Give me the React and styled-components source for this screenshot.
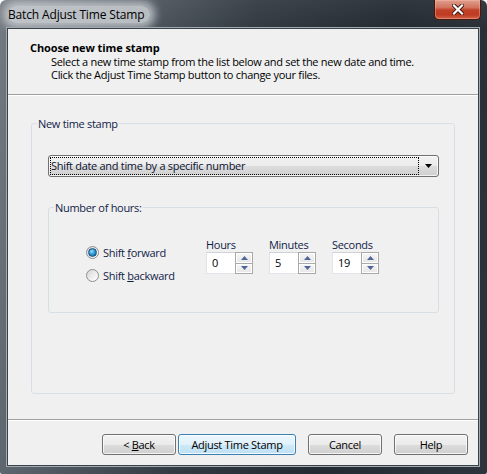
import React from 'react';
import styled, { createGlobalStyle } from 'styled-components';

const GlobalStyle = createGlobalStyle`
  html, body {
    margin: 0;
    padding: 0;
    background: #fff;
  }
  body {
    font-family: "Open Sans", "Noto Sans", sans-serif;
    font-size: 11px;
    letter-spacing: -0.3px;
    color: #000;
  }
  * {
    box-sizing: border-box;
  }
`;

const Window = styled.div`
  width: 487px;
  height: 474px;
  display: flex;
  flex-direction: column;
  border-radius: 6px 6px 2px 2px;
  overflow: hidden;
  background:
    linear-gradient(180deg, rgba(255, 255, 255, 0.06) 0%, rgba(0, 0, 0, 0) 30px),
    linear-gradient(100deg, #737a81 0%, #59616a 18%, #323a42 45%, #232a31 70%, #2d343b 100%);
`;

const TitleBar = styled.div`
  height: 28px;
  flex: none;
  display: flex;
  justify-content: space-between;
  align-items: flex-start;
  padding-left: 8px;
  padding-right: 6px;
`;

const TitleText = styled.span`
  margin-top: 6px;
  line-height: 17px;
  font-size: 12px;
  letter-spacing: -0.15px;
  color: #000;
  background: rgba(210, 214, 218, 0.8);
  border-radius: 8px;
  box-shadow: 0 0 8px 5px rgba(210, 214, 218, 0.78);
  padding-right: 6px;
`;

const CloseButton = styled.div`
  width: 47px;
  height: 20px;
  display: flex;
  align-items: center;
  justify-content: center;
  border: 1px solid #4a170e;
  border-top: none;
  border-radius: 0 0 5px 5px;
  background: linear-gradient(180deg, #e0a090 0%, #d2735d 40%, #c14229 52%, #bd3b22 78%, #d2654a 100%);
  box-shadow: inset 0 0 0 1px rgba(255, 190, 170, 0.4);
`;

const Client = styled.div`
  flex: 1;
  display: flex;
  flex-direction: column;
  margin: 0 8px 8px 7px;
  background: #f0f0f0;
  border: 1px solid #3a4249;
  box-shadow: 0 0 0 1px #a2aab1;
`;

const Header = styled.div`
  height: 66px;
  flex: none;
  padding: 11px 0 0 22px;
  border-bottom: 1px solid #a0a0a0;
  box-shadow: 0 1px 0 #fff;
`;

const HeaderTitle = styled.div`
  font-weight: 700;
  letter-spacing: -0.1px;
  line-height: 15px;
`;

const HeaderText = styled.div`
  margin-left: 21px;
  line-height: 13px;
`;

const Body = styled.div`
  flex: 1;
  display: flex;
  flex-direction: column;
  padding: 21px 23px 25px 23px;
`;

const Group = styled.fieldset`
  margin: 0;
  padding: 0;
  min-width: 0;
  border: 1px solid #d5dfe5;
  border-radius: 3px;
  flex: ${p => (p.$grow ? 1 : 'none')};
`;

const Legend = styled.legend`
  margin-left: 5px;
  padding: 0 1px;
  line-height: 15px;
  color: #101c48;
`;

const GroupInner = styled.div`
  padding: ${p => p.$pad};
`;

const Dropdown = styled.div`
  height: 22px;
  display: flex;
  align-items: stretch;
  padding: 1px;
  border: 1px solid #707070;
  border-radius: 3px;
  background: linear-gradient(180deg, #f2f2f2 0%, #ebebeb 50%, #dddddd 50%, #cfcfcf 100%);
  box-shadow: inset 0 0 0 1px rgba(255, 255, 255, 0.7);
`;

const FocusText = styled.div`
  flex: 1;
  border: 1px dotted #000;
  line-height: 16px;
  color: #0a1030;
`;

const Arrow = styled.div`
  width: 18px;
  display: flex;
  align-items: center;
  justify-content: center;
`;

const HoursRow = styled.div`
  display: flex;
  align-items: flex-start;
`;

const RadioColumn = styled.div`
  width: 120px;
  margin-top: 28px;
  display: flex;
  flex-direction: column;
  gap: 5px;
`;

const RadioRow = styled.label`
  height: 18px;
  display: flex;
  align-items: center;
  gap: 4px;
  color: #101c48;
`;

const RadioCircle = styled.span`
  width: 13px;
  height: 13px;
  border-radius: 50%;
  border: 1px solid #8e8f8f;
  background: linear-gradient(135deg, #d6d6d6 0%, #f4f4f4 70%, #ffffff 100%);
  display: flex;
  align-items: center;
  justify-content: center;
  &::after {
    content: '';
    display: ${p => (p.$checked ? 'block' : 'none')};
    width: 7px;
    height: 7px;
    border-radius: 50%;
    border: 1px solid #1f4f78;
    background: radial-gradient(circle at 40% 35%, #9fe0fb 0%, #2e9ad6 45%, #0d5c94 100%);
  }
`;

const Key = styled.span`
  text-decoration: underline;
`;

const SpinColumns = styled.div`
  display: flex;
  gap: 16px;
  margin-top: 22px;
`;

const SpinField = styled.div`
  display: flex;
  flex-direction: column;
`;

const SpinLabel = styled.div`
  line-height: 15px;
  color: #101c48;
`;

const SpinBox = styled.div`
  width: 47px;
  height: 22px;
  display: flex;
`;

const SpinInput = styled.div`
  width: 29px;
  background: #fff;
  border: 1px solid #e2e3ea;
  border-top-color: #cfd2d8;
  border-right: none;
  padding-left: 5px;
  line-height: 20px;
`;

const SpinButtons = styled.div`
  width: 18px;
  display: flex;
  flex-direction: column;
`;

const SpinButton = styled.div`
  flex: 1;
  display: flex;
  align-items: center;
  justify-content: center;
  border: 1px solid #a9a9a9;
  border-top-width: ${p => (p.$down ? 0 : 1)}px;
  background: linear-gradient(180deg, #f6f6f6 0%, #e6e6e6 100%);
  box-shadow: inset 0 0 0 1px #fff;
`;

const Footer = styled.div`
  height: 46px;
  flex: none;
  display: flex;
  justify-content: flex-end;
  align-items: flex-start;
  padding: 14px 10px 0 0;
  border-top: 1px solid #a0a0a0;
  box-shadow: inset 0 1px 0 #fff;
`;

const Button = styled.button`
  width: ${p => p.$w}px;
  height: 21px;
  margin: 0 ${p => p.$gap}px 0 0;
  padding: 0;
  font: inherit;
  letter-spacing: inherit;
  color: #000;
  border: 1px solid ${p => (p.$default ? '#3c7fb1' : '#707070')};
  border-radius: 3px;
  background: ${p =>
    p.$default
      ? 'linear-gradient(180deg, #ecf7fd 0%, #e0f1fb 50%, #cde9f8 50%, #bfe1f4 100%)'
      : 'linear-gradient(180deg, #f2f2f2 0%, #ebebeb 50%, #dddddd 50%, #cfcfcf 100%)'};
  box-shadow: inset 0 0 0 1px rgba(255, 255, 255, 0.75);
`;

const UpArrow = () => (
  <svg width="7" height="4" viewBox="0 0 7 4">
    <polygon points="0,4 3.5,0 7,4" fill="#4f6698" />
  </svg>
);

const DownArrow = ({ color = '#4f6698', w = 7, h = 4 }) => (
  <svg width={w} height={h} viewBox={`0 0 ${w} ${h}`}>
    <polygon points={`0,0 ${w},0 ${w / 2},${h}`} fill={color} />
  </svg>
);

const CloseIcon = () => (
  <svg width="12" height="11" viewBox="0 0 12 11">
    <path d="M2 1.5 L10 9.5 M10 1.5 L2 9.5" stroke="#3b130b" strokeWidth="4" strokeLinecap="square" />
    <path d="M2 1.5 L10 9.5 M10 1.5 L2 9.5" stroke="#ffffff" strokeWidth="2.2" strokeLinecap="square" />
  </svg>
);

const spinners = [
  { label: 'Hours', value: '0' },
  { label: 'Minutes', value: '5' },
  { label: 'Seconds', value: '19' },
];

const App = () => (
  <>
    <GlobalStyle />
    <Window>
      <TitleBar>
        <TitleText>Batch Adjust Time Stamp</TitleText>
        <CloseButton>
          <CloseIcon />
        </CloseButton>
      </TitleBar>
      <Client>
        <Header>
          <HeaderTitle>Choose new time stamp</HeaderTitle>
          <HeaderText>
            Select a new time stamp from the list below and set the new date and time.
            <br />
            Click the Adjust Time Stamp button to change your files.
          </HeaderText>
        </Header>
        <Body>
          <Group $grow>
            <Legend>New time stamp</Legend>
            <GroupInner $pad="24px 15px 0 16px">
              <Dropdown>
                <FocusText>Shift date and time by a specific number</FocusText>
                <Arrow>
                  <DownArrow color="#000" w={7} h={4} />
                </Arrow>
              </Dropdown>
              <GroupInner $pad="23px 0 0 0">
                <Group>
                  <Legend>Number of hours:</Legend>
                  <GroupInner $pad="0 0 28px 37px">
                    <HoursRow>
                      <RadioColumn>
                        <RadioRow>
                          <RadioCircle $checked />
                          <span>Shift <Key>f</Key>orward</span>
                        </RadioRow>
                        <RadioRow>
                          <RadioCircle />
                          <span>Shift <Key>b</Key>ackward</span>
                        </RadioRow>
                      </RadioColumn>
                      <SpinColumns>
                        {spinners.map(s => (
                          <SpinField key={s.label}>
                            <SpinLabel>{s.label}</SpinLabel>
                            <SpinBox>
                              <SpinInput>{s.value}</SpinInput>
                              <SpinButtons>
                                <SpinButton>
                                  <UpArrow />
                                </SpinButton>
                                <SpinButton $down>
                                  <DownArrow />
                                </SpinButton>
                              </SpinButtons>
                            </SpinBox>
                          </SpinField>
                        ))}
                      </SpinColumns>
                    </HoursRow>
                  </GroupInner>
                </Group>
              </GroupInner>
            </GroupInner>
          </Group>
        </Body>
        <Footer>
          <Button $w={74} $gap={2}>&lt; <Key>B</Key>ack</Button>
          <Button $w={118} $gap={12} $default>Ad<Key>j</Key>ust Time Stamp</Button>
          <Button $w={74} $gap={12}>Cancel</Button>
          <Button $w={74} $gap={0}>Help</Button>
        </Footer>
      </Client>
    </Window>
  </>
);

export default App;
